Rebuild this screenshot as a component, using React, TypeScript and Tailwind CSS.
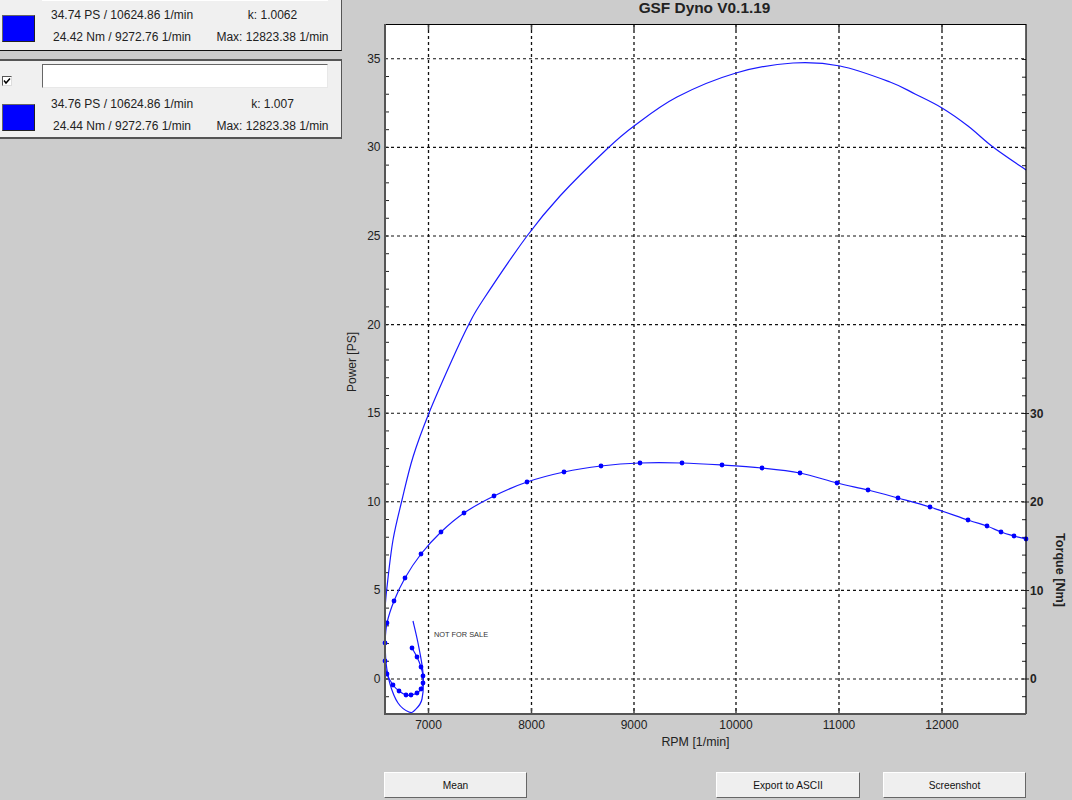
const X_TICKS = [
  { label: "7000", x: 428.5 },
  { label: "8000", x: 531.5 },
  { label: "9000", x: 634 },
  { label: "10000", x: 736 },
  { label: "11000", x: 839 },
  { label: "12000", x: 942 },
];
const Y_LEFT = [0, 5, 10, 15, 20, 25, 30, 35];
const Y_RIGHT = [0, 10, 20, 30];
const yFor = (v: number) => 679 - v * 17.72;
const yRight = (v: number) => 679 - v * 8.85;

const POWER: [number, number][] = [
  [413, 621], [418, 643], [423, 673], [422, 699], [415, 710], [409, 712], [398, 703], [390, 684],
  [386, 662], [385, 635], [385, 610], [387, 587], [393, 540], [402, 500], [413, 457], [429, 413],
  [452, 360], [469, 324], [483, 300], [527, 236], [560, 196], [607, 149], [634, 126], [677, 97],
  [736, 73], [793, 63], [840, 66], [890, 82], [915, 94], [942, 108], [968, 126], [993, 147], [1026, 170],
];
const TORQUE: [number, number][] = [
  [412, 648], [417, 657], [421, 667], [423, 676], [423, 683], [421, 689], [417, 693], [411, 695],
  [406, 695], [399, 691], [393, 685], [387, 674], [385, 661], [385, 643], [387, 623], [394, 601],
  [405, 578], [421, 554], [441, 532], [464, 513], [494, 496], [527, 482], [564, 472], [601, 466],
  [640, 463], [682, 463], [722, 465], [762, 468], [800, 473], [837, 483], [868, 490], [898, 498],
  [930, 507], [968, 520], [987, 526], [1001, 532], [1014, 536], [1026, 539],
];

// catmull-rom through the sample points
const smooth = (pts: [number, number][]) => {
  let d = `M${pts[0][0]} ${pts[0][1]}`;
  for (let i = 0; i < pts.length - 1; i++) {
    const p0 = pts[Math.max(0, i - 1)];
    const p1 = pts[i];
    const p2 = pts[i + 1];
    const p3 = pts[Math.min(pts.length - 1, i + 2)];
    d += ` C${p1[0] + (p2[0] - p0[0]) / 6} ${p1[1] + (p2[1] - p0[1]) / 6} ${p2[0] - (p3[0] - p1[0]) / 6} ${p2[1] - (p3[1] - p1[1]) / 6} ${p2[0]} ${p2[1]}`;
  }
  return d;
};

function Readout({ power, torque, k }: { power: string; torque: string; k: string }) {
  return (
    <div className="flex items-start">
      <div className="ml-[2px] mt-[2px] h-[27px] w-[33px] border border-t-[#666] border-l-[#666] border-r-[#222] border-b-[#222] bg-[#0000ff]" />
      <div className="ml-[16px] w-[142px] text-center text-[12px] leading-[22px] text-[#222]">
        <div className="-mt-[9px] whitespace-nowrap">{power}</div>
        <div className="whitespace-nowrap">{torque}</div>
      </div>
      <div className="ml-[23px] w-[113px] text-center text-[12px] leading-[22px] text-[#222]">
        <div className="-mt-[9px] whitespace-nowrap">k: {k}</div>
        <div className="whitespace-nowrap">Max: 12823.38 1/min</div>
      </div>
    </div>
  );
}

function Button({ label, className }: { label: string; className: string }) {
  return (
    <div
      className={`flex h-[26px] items-center justify-center border border-t-white border-l-white border-r-[#666] border-b-[#666] bg-[#efefef] pt-[1px] text-[10.2px] text-[#111] ${className}`}
    >
      {label}
    </div>
  );
}

function Chart() {
  return (
    <svg width={730} height={736} viewBox="342 24 730 736" className="block">
      <rect x={385} y={24} width={641} height={690} fill="#ffffff" />
      {X_TICKS.map((t) => (
        <line key={t.x} x1={t.x} x2={t.x} y1={24} y2={714} stroke="#111" strokeWidth={1.3} strokeDasharray="3 3" />
      ))}
      {Y_LEFT.map((v) => (
        <line key={v} x1={385} x2={1026} y1={yFor(v)} y2={yFor(v)} stroke="#111" strokeWidth={1.1} strokeDasharray="3 3" />
      ))}
      {/* minor ticks */}
      {Array.from({ length: 37 }, (_, i) => i - 2).map((v) => (
        <line key={v} x1={385} x2={389} y1={yFor(v)} y2={yFor(v)} stroke="#222" strokeWidth={1} />
      ))}
      {Array.from({ length: 37 }, (_, i) => i * 2 - 2).map((v) => (
        <line key={v} x1={1022} x2={1026} y1={yRight(v)} y2={yRight(v)} stroke="#222" strokeWidth={1} />
      ))}
      {X_TICKS.map((t) => (
        <g key={t.x}>
          <line x1={t.x} x2={t.x} y1={24} y2={30} stroke="#444" strokeWidth={1.5} />
          <line x1={t.x} x2={t.x} y1={708} y2={714} stroke="#444" strokeWidth={1.5} />
        </g>
      ))}

      <path d={smooth(POWER)} fill="none" stroke="#1a1aff" strokeWidth={1.2} />
      <path d={smooth(TORQUE)} fill="none" stroke="#1a1aff" strokeWidth={1.2} />
      {TORQUE.map(([x, y]) => (
        <circle key={`${x}-${y}`} cx={x} cy={y} r={2.4} fill="#0000ff" />
      ))}

      <line x1={385} x2={1026} y1={24.5} y2={24.5} stroke="#000" />
      <line x1={1026} x2={1026} y1={24} y2={714} stroke="#000" strokeWidth={1.2} />
      <line x1={385} x2={385} y1={24} y2={715} stroke="#555" strokeWidth={2} />
      <line x1={385} x2={1026} y1={714} y2={714} stroke="#555" strokeWidth={2} />

      {Y_LEFT.map((v) => (
        <text key={v} x={380.5} y={yFor(v) + 4} textAnchor="end" fontSize={12} fill="#222">
          {v}
        </text>
      ))}
      {Y_RIGHT.map((v) => (
        <g key={v}>
          <line x1={1026} x2={1029} y1={yRight(v)} y2={yRight(v)} stroke="#222" />
          <text x={1030} y={yRight(v) + 4} fontSize={12} fontWeight={700} fill="#222">
            {v}
          </text>
        </g>
      ))}
      {X_TICKS.map((t) => (
        <text key={t.x} x={t.x} y={729} textAnchor="middle" fontSize={12} fill="#222">
          {t.label}
        </text>
      ))}
      <text x={695.5} y={746} textAnchor="middle" fontSize={12.4} fill="#222">
        RPM [1/min]
      </text>
      <text transform="translate(356 362) rotate(-90)" textAnchor="middle" fontSize={12} fill="#222">
        Power [PS]
      </text>
      <text transform="translate(1056 570) rotate(90)" textAnchor="middle" fontSize={12.6} fontWeight={700} fill="#222">
        Torque [Nm]
      </text>
      <text x={434} y={637} fontSize={7.4} fill="#333">
        NOT FOR SALE
      </text>
    </svg>
  );
}

export default function App() {
  return (
    <div className="flex h-[800px] w-[1072px] overflow-hidden bg-[#cccccc] font-['Liberation_Sans',Arial,sans-serif]">
      {/* run list */}
      <div className="w-[342px] shrink-0">
        <div className="h-[51px] overflow-hidden border-b border-b-[#111] border-r border-r-[#555] bg-[#f0f0f0]">
          <div className="ml-[42px] h-[1px] w-[286px] bg-white" />
          <div className="mt-[12px]">
            <Readout power="34.74 PS / 10624.86 1/min" torque="24.42 Nm / 9272.76 1/min" k="1.0062" />
          </div>
        </div>
        <div className="mt-[8px] h-[80px] border-y-2 border-y-[#555] border-r border-r-[#555] bg-[#f0f0f0]">
          <div className="flex items-start pt-[3px]">
            <div className="ml-[2px] mt-[12px] flex h-[10px] w-[10px] items-center justify-center border border-t-[#555] border-l-[#555] border-r-[#ddd] border-b-[#ddd] bg-white">
              <svg viewBox="0 0 8 8" className="h-[8px] w-[8px]">
                <path d="M1 3.5 3 6 7 1.5" fill="none" stroke="#000" strokeWidth={1.5} />
              </svg>
            </div>
            <div className="ml-[30px] h-[24px] w-[286px] border border-t-[#666] border-l-[#666] border-r-[#e8e8e8] border-b-[#e8e8e8] bg-white" />
          </div>
          <div className="mt-[14px]">
            <Readout power="34.76 PS / 10624.86 1/min" torque="24.44 Nm / 9272.76 1/min" k="1.007" />
          </div>
        </div>
      </div>

      {/* plot */}
      <div className="w-[730px] shrink-0">
        <div className="h-[24px] pr-[5px] text-center text-[15.4px] font-bold leading-[15px] text-[#222]">GSF Dyno V0.1.19</div>
        <Chart />
        <div className="mt-[12px] flex pl-[42px]">
          <Button label="Mean" className="w-[143px]" />
          <Button label="Export to ASCII" className="ml-[189px] w-[144px]" />
          <Button label="Screenshot" className="ml-[23px] w-[143px]" />
        </div>
      </div>
    </div>
  );
}
